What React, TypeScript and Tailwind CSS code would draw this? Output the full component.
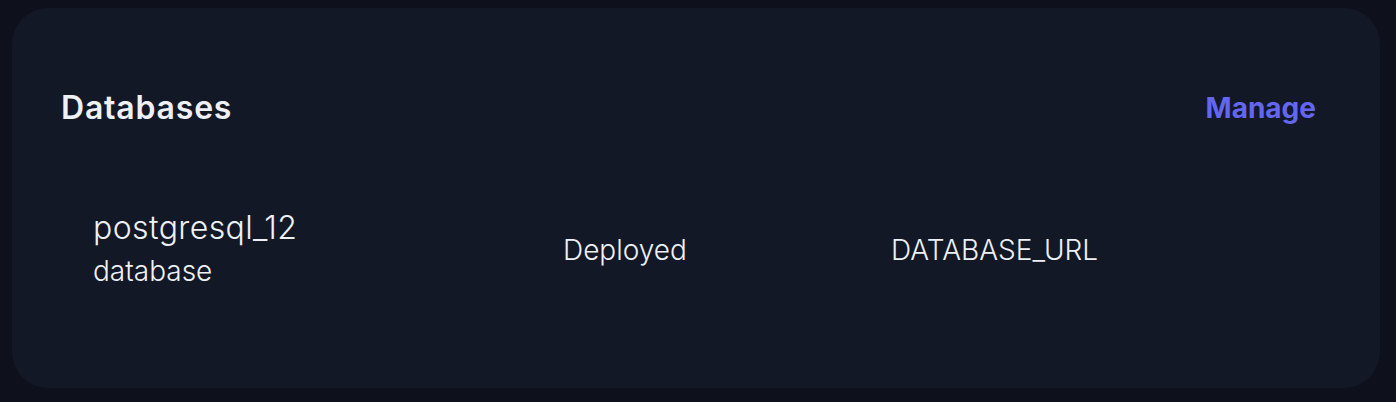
import React from 'react';

type Database = {
  name: string;
  kind: string;
  status: string;
  envVar: string;
};

const databases: Database[] = [
  { name: 'postgresql_12', kind: 'database', status: 'Deployed', envVar: 'DATABASE_URL' },
];

export default function App() {
  return (
    <div className="h-[402px] bg-[#0e111b] pt-2 pl-3 pr-4 font-['Inter',sans-serif]">
      <div className="h-[380px] w-[1368px] rounded-[36px] bg-[#131826] px-[49px] pt-[82px]">
        <div className="flex items-center justify-between pr-[16px]">
          <h2 className="text-[32px] font-semibold leading-[36px] tracking-[0.8px] text-[#eef0f5]">Databases</h2>
          <button className="mr-[-1px] text-[28px] font-bold leading-[36px] text-[#6366f1]">Manage</button>
        </div>

        <div className="mt-[82px]">
          {databases.map((db) => (
            <div key={db.name} className="grid grid-cols-[470px_328px_1fr] items-center pl-8 text-[#eef0f5]">
              <div>
                <div className="text-[32px] font-light leading-[40px] tracking-[0.4px]">{db.name}</div>
                <div className="mt-[3px] text-[28px] font-light leading-[40px]">{db.kind}</div>
              </div>
              <div className="text-[28px] font-light leading-[40px]">{db.status}</div>
              <div className="text-[28px] font-light leading-[40px]">{db.envVar}</div>
            </div>
          ))}
        </div>
      </div>
    </div>
  );
}
